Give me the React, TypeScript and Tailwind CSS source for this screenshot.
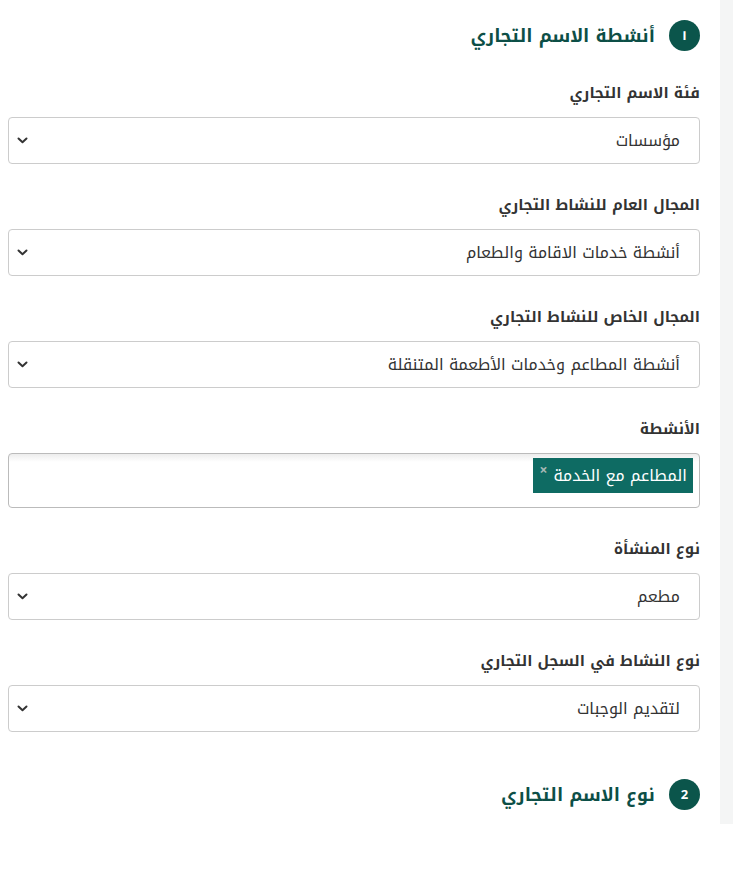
import { ReactNode } from 'react'

const font = { fontFamily: '"Noto Kufi Arabic", "Noto Sans Arabic", "DejaVu Sans", sans-serif' }

function Chevron() {
  return (
    <svg width="11" height="7" viewBox="0 0 11 7" fill="none" className="shrink-0">
      <path d="M1.5 1.5L5.5 5.2L9.5 1.5" stroke="#333" strokeWidth="2" strokeLinecap="round" strokeLinejoin="round" />
    </svg>
  )
}

function StepHeading({ num, title }: { num: string; title: string }) {
  return (
    <div className="flex items-center gap-[14px]">
      <span className="flex h-[31px] w-[31px] items-center justify-center rounded-full bg-[#0b554b] text-[13px] font-bold text-white">
        {num}
      </span>
      <h2 className="text-[18px] font-bold leading-[30px] text-[#0d4f47]">{title}</h2>
    </div>
  )
}

function Field({ label, children }: { label: string; children: ReactNode }) {
  return (
    <div>
      <label className="mb-[14px] block text-[15px] font-bold leading-5 text-[#333]">{label}</label>
      {children}
    </div>
  )
}

function Select({ value }: { value: string }) {
  return (
    <div className="flex h-[47px] items-center justify-between rounded-[4px] border border-[#ccc] bg-white pr-[19px] pl-[8px]">
      <span className="text-[16px] text-[#333]">{value}</span>
      <Chevron />
    </div>
  )
}

export default function App() {
  return (
    <div dir="rtl" style={font} className="flex bg-white">
      <div className="w-[13px] shrink-0 bg-[#f4f5f5]" />
      <div className="flex w-[720px] flex-col pt-[20px] pr-[20px] pb-[14px] pl-[8px]">
        <StepHeading num="١" title="أنشطة الاسم التجاري" />
        <div className="mt-[32px] flex flex-col gap-[31px]">
          <Field label="فئة الاسم التجاري">
            <Select value="مؤسسات" />
          </Field>
          <Field label="المجال العام للنشاط التجاري">
            <Select value="أنشطة خدمات الاقامة والطعام" />
          </Field>
          <Field label="المجال الخاص للنشاط التجاري">
            <Select value="أنشطة المطاعم وخدمات الأطعمة المتنقلة" />
          </Field>
          <Field label="الأنشطة">
            <div className="h-[55px] rounded-[4px] border border-[#bbb] bg-[linear-gradient(to_bottom,#eee_1%,#fff_15%)] pt-[4px] pr-[6px]">
              <span className="inline-flex h-[35px] items-center gap-[6px] bg-[#0e6b63] pr-[6px] pl-[6px] text-[16px] text-white">
                المطاعم مع الخدمة
                <span className="self-start pt-[6px] text-[14px] leading-none font-bold text-[#a8b8b5]">×</span>
              </span>
            </div>
          </Field>
          <Field label="نوع المنشأة">
            <Select value="مطعم" />
          </Field>
          <Field label="نوع النشاط في السجل التجاري">
            <Select value="لتقديم الوجبات" />
          </Field>
        </div>
        <div className="mt-[47px]">
          <StepHeading num="2" title="نوع الاسم التجاري" />
        </div>
      </div>
    </div>
  )
}
